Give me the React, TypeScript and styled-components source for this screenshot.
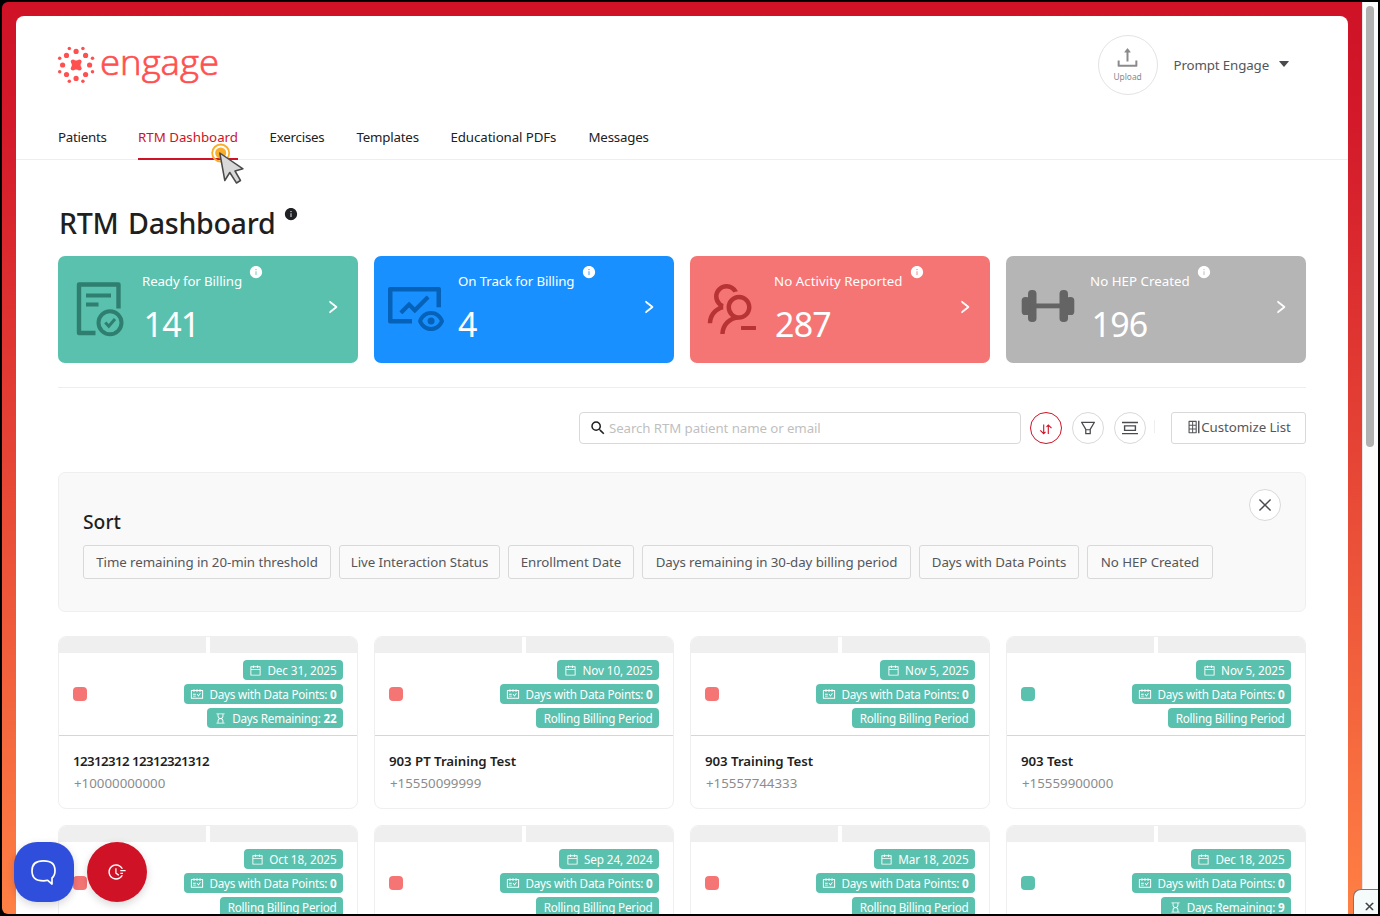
import React from "react";
import styled, { createGlobalStyle, css } from "styled-components";
import {
  AiOutlineFundView,
  AiOutlineUsergroupDelete,
  AiOutlineRight,
  AiFillInfoCircle,
  AiOutlineUpload,
  AiOutlineFilter,
  AiOutlineClose,
  AiOutlineCalendar,
  AiOutlineSchedule,
  AiOutlineHourglass,
  AiOutlineFieldTime,
  AiOutlineInsertRowRight,
  AiFillCaretDown,
} from "react-icons/ai";
import { MdSearch } from "react-icons/md";

const GlobalStyle = createGlobalStyle`
  * { box-sizing: border-box; }
  body {
    margin: 0;
    background: #000;
    font-family: "Noto Sans", "Open Sans", sans-serif;
    font-size: 13.3px;
    color: #202124;
    overflow: hidden;
  }
  button { font: inherit; letter-spacing: inherit; }
  svg { display: block; flex: none; }
`;

const Frame = styled.div`
  position: relative;
  display: flex;
  width: 1380px;
  height: 916px;
  padding: 2px;
  background: #000;
  overflow: hidden;
`;

const Backdrop = styled.div`
  width: 1360px;
  height: 912px;
  padding: 14px 14px 0;
  border-radius: 6px 0 0 6px;
  background: linear-gradient(180deg, #cf1226 0%, #d3192a 13%, #ff8044 100%);
  overflow: hidden;
`;

const Page = styled.main`
  height: 898px;
  background: #fff;
  border-radius: 8px 8px 0 0;
  overflow: hidden;
`;

const ScrollTrack = styled.div`
  width: 16px;
  padding: 4px 4px 0 3px;
  background: #fcfcfc;
  border-left: 1px solid #e4e4e4;
`;

const ScrollThumb = styled.div`
  width: 8px;
  height: 441px;
  border-radius: 4px;
  background: #b1b1b1;
`;

const Header = styled.header`
  display: flex;
  justify-content: space-between;
  height: 99px;
  padding: 19px 58px 0 42px;
`;

const Logo = styled.svg`
  margin-top: 8px;
  overflow: visible;
`;

const Account = styled.div`
  display: flex;
  align-items: center;
  height: 60px;
  color: #54565a;
  letter-spacing: -0.13px;
`;

const UploadButton = styled.button`
  display: flex;
  flex-direction: column;
  align-items: center;
  width: 60px;
  height: 60px;
  margin-right: 16px;
  padding: 8px 0 0;
  border: 1px solid #e3e3e3;
  border-radius: 50%;
  background: #fff;
  color: #8a8a8a;
  span { font-size: 8.4px; line-height: 12px; margin-top: 0; letter-spacing: 0; }
`;

const Caret = styled(AiFillCaretDown)`
  margin: -3px -1px 0 8px;
  color: #4a4b4e;
`;

const Nav = styled.nav`
  display: flex;
  gap: 32px;
  height: 45px;
  padding-left: 42px;
  border-bottom: 1px solid #eee;
`;

const NavItem = styled.a<{ $active?: boolean; $w: number; $track: number }>`
  width: ${(p) => p.$w}px;
  height: 45px;
  padding-top: 12px;
  line-height: 20px;
  letter-spacing: ${(p) => p.$track}px;
  white-space: nowrap;
  color: ${(p) => (p.$active ? "#cf1226" : "#202124")};
  border-bottom: 2px solid ${(p) => (p.$active ? "#cf1226" : "transparent")};
`;

const Content = styled.div`
  padding: 0 42px;
`;

const TitleRow = styled.div`
  display: flex;
  height: 96px;
  padding-top: 43px;
`;

const Title = styled.h1`
  width: 219px;
  margin: 0;
  padding-left: 1px;
  font-size: 28.6px;
  line-height: 40px;
  font-weight: 500;
  letter-spacing: -0.3px;
  word-spacing: 2.5px;
  white-space: nowrap;
  color: #1f1f1f;
`;

const InfoIcon = styled(AiFillInfoCircle)`
  margin: 4px 0 0 7px;
`;

const CardGrid = styled.div`
  display: grid;
  grid-template-columns: repeat(4, 300px);
  gap: 16px;
`;

const StatGrid = styled(CardGrid)`
  padding-bottom: 24px;
  border-bottom: 1px solid #eee;
`;

const StatCard = styled.section<{ $bg: string }>`
  display: flex;
  height: 107px;
  border-radius: 7px;
  color: #fff;
  background: ${(p) => p.$bg};
`;

const StatIcon = styled.div<{ $ink: string; $lift: number }>`
  display: flex;
  align-items: center;
  justify-content: center;
  width: 84px;
  padding-bottom: ${(p) => p.$lift}px;
  color: ${(p) => p.$ink};
`;

const StatBody = styled.div`
  flex: 1;
  padding-top: 8px;
`;

const StatLabel = styled.div<{ $track: number }>`
  display: flex;
  height: 34px;
  letter-spacing: ${(p) => p.$track}px;
  white-space: nowrap;
  span { line-height: 34px; }
  svg { margin: 1px 0 0 7.5px; }
`;

const StatValue = styled.div<{ $indent: number }>`
  padding-left: ${(p) => p.$indent}px;
  font-size: 34px;
  line-height: 48px;
  margin-top: 2px;
  letter-spacing: -0.8px;
`;

const StatArrow = styled(AiOutlineRight)`
  align-self: center;
  margin: -5px 17px 0 0;
  stroke: currentColor;
  stroke-width: 45px;
`;

const Toolbar = styled.div`
  display: flex;
  align-items: center;
  justify-content: flex-end;
  height: 32px;
  margin-top: 24px;
`;

const SearchBox = styled.label`
  display: flex;
  align-items: center;
  gap: 2px;
  width: 442px;
  height: 32px;
  margin-right: 9px;
  padding-left: 9px;
  border: 1px solid #d9d9d9;
  border-radius: 4px;
  svg { margin-top: -1px; color: #202020; }
  input {
    flex: 1;
    border: 0;
    outline: 0;
    padding: 0;
    font: inherit;
    letter-spacing: -0.1px;
  }
  input::placeholder { color: #bfbfbf; }
`;

const RoundButton = styled.button<{ $accent?: boolean }>`
  display: flex;
  align-items: center;
  justify-content: center;
  width: 32px;
  height: 32px;
  padding: 0;
  border: 1px solid ${(p) => (p.$accent ? "#cf1226" : "#d9d9d9")};
  border-radius: 50%;
  background: #fff;
  color: ${(p) => (p.$accent ? "#cf1226" : "#4a4b4e")};
  & + & { margin-left: 10px; }
`;

const ToolDivider = styled.i`
  width: 1px;
  height: 13px;
  margin: -3px 16px 0 8px;
  background: #eee;
`;

const buttonFace = css`
  display: flex;
  align-items: center;
  justify-content: center;
  padding: 0;
  border: 1px solid #d9d9d9;
  border-radius: 3px;
  color: #54565a;
  letter-spacing: -0.07px;
  white-space: nowrap;
`;

const CustomizeButton = styled.button`
  ${buttonFace}
  width: 135px;
  height: 32px;
  padding-bottom: 2px;
  background: #fff;
  svg { margin-right: -1px; }
`;

const SortPanel = styled.section`
  height: 140px;
  margin: 28px 0 24px;
  padding: 16px 24px 0;
  border: 1px solid #efefef;
  border-radius: 7px;
  background: #f9f9f9;
`;

const CloseRow = styled.div`
  display: flex;
  justify-content: flex-end;
  height: 20px;
`;

const SortTitle = styled.h2`
  margin: 0;
  font-size: 19.3px;
  line-height: 26px;
  font-weight: 500;
  color: #1f1f1f;
`;

const SortOptions = styled.div`
  display: flex;
  gap: 8px;
  margin-top: 10px;
`;

const SortOption = styled.button<{ $w: number }>`
  ${buttonFace}
  width: ${(p) => p.$w}px;
  height: 34px;
  background: #fafafa;
`;

const PatientCard = styled.article`
  height: 173px;
  border: 1px solid #efefef;
  border-radius: 8px;
  background: #fff;
  overflow: hidden;
`;

const Strip = styled.div`
  display: flex;
  gap: 4px;
  height: 16px;
  background: #fff;
  &::before, &::after { content: ""; flex: 1; background: #efefef; }
`;

const CardTop = styled.div`
  display: flex;
  align-items: center;
  justify-content: space-between;
  height: 83px;
  padding: 0 14px;
  border-bottom: 1px solid #d6d6d6;
`;

const Status = styled.span<{ $color: string }>`
  width: 14px;
  height: 14px;
  border-radius: 4px;
  background: ${(p) => p.$color};
`;

const Badges = styled.div`
  display: flex;
  flex-direction: column;
  align-items: flex-end;
  gap: 4px;
`;

const Badge = styled.span<{ $w: number; $track?: number }>`
  display: flex;
  align-items: center;
  justify-content: flex-end;
  width: ${(p) => p.$w}px;
  height: 20px;
  padding: 0 6.5px 0 0;
  border-radius: 4px;
  background: #5ac1ae;
  color: #fff;
  font-size: 11.7px;
  letter-spacing: ${(p) => p.$track ?? -0.22}px;
  line-height: 20px;
  white-space: pre;
  svg { margin: 0 5px 0 0; }
  b { font-weight: 700; }
`;

const PatientName = styled.div<{ $track?: number }>`
  padding: 14px 14px 0;
  line-height: 22px;
  font-weight: 600;
  letter-spacing: ${(p) => p.$track ?? -0.06}px;
  color: #1f1f1f;
`;

const PatientPhone = styled.div`
  padding: 0 15px;
  line-height: 22px;
  color: #8c8c8c;
`;

const Pointer = styled.svg`
  position: absolute;
  left: 208px;
  top: 142px;
`;

const ChatLauncher = styled.button`
  position: absolute;
  left: 14px;
  top: 842px;
  display: flex;
  align-items: center;
  justify-content: center;
  width: 60px;
  height: 60px;
  padding: 0;
  border: 0;
  border-radius: 23px;
  color: #fff;
  background: #304edc;
  box-shadow: 0 3px 8px rgba(0, 0, 0, 0.16);
`;

const TimeLauncher = styled(ChatLauncher)`
  left: 87px;
  border-radius: 50%;
  background: #cf1226;
`;

const CornerClose = styled.button`
  position: absolute;
  left: 1353px;
  top: 889px;
  display: flex;
  width: 25px;
  height: 25px;
  padding: 11px 0 0 10px;
  border: 1px solid #777;
  border-width: 1px 0 0 1px;
  border-radius: 8px 0 0 0;
  background: #f5fbfb;
  color: #333;
`;

const EngageLogo = () => (
  <Logo width="164" height="44" viewBox="0 0 164 44">
    <g fill="#ff5050">
      {[
        [18.1, 8.4], [27.6, 12.4], [31.6, 22], [27.6, 31.5], [18.1, 35.4], [8.5, 31.5], [4.6, 22], [8.5, 12.4],
      ].map(([x, y]) => <circle key={`${x}-${y}`} cx={x} cy={y} r="2.6" />)}
      {[
        [11.3, 5.4], [24.9, 5.4], [34.5, 15.2], [34.5, 28.7], [24.9, 38.3], [11.3, 38.3], [1.7, 28.7], [1.7, 15.2],
      ].map(([x, y]) => <circle key={`${x}-${y}`} cx={x} cy={y} r="1.75" />)}
      {[
        [15, 18.8], [21.4, 18.8], [15, 25.2], [21.4, 25.2],
      ].map(([x, y]) => <circle key={`${x}-${y}`} cx={x} cy={y} r="2.2" />)}
      <rect x="13.8" y="17.4" width="8.8" height="9.2" />
      <text x="42" y="31.5" fontFamily="Open Sans" fontSize="34" fontWeight="300" textLength="119" lengthAdjust="spacingAndGlyphs" stroke="#ff5050" strokeWidth="0.7">engage</text>
    </g>
  </Logo>
);

const ApprovedDocument = () => (
  <svg width="48" height="56" viewBox="0 0 48 56" fill="none" stroke="currentColor" strokeWidth="4.4">
    <path d="M19.500 52H3V3.500H42.500V27.500" strokeLinejoin="round" />
    <path d="M10 14.500H35M10 23.500H22.500" strokeWidth="4" />
    <circle cx="34" cy="41.700" r="11.500" strokeWidth="4" />
    <path d="M29.300 41.500l3.500 3.800 6.200-7.300" strokeWidth="3" />
  </svg>
);

const Dumbbell = () => (
  <svg width="54" height="34" viewBox="0 0 54 34" fill="currentColor">
    <rect x="12" y="14.5" width="30" height="4.8" />
    <rect x="7" y="1" width="8.500" height="32" rx="3.8" />
    <rect x="38.500" y="1" width="8.500" height="32" rx="3.8" />
    <rect x="0.700" y="8" width="8" height="18" rx="3.6" />
    <rect x="45.300" y="8" width="8" height="18" rx="3.6" />
  </svg>
);

const SortArrows = () => (
  <svg width="14" height="14" viewBox="0 0 14 14" fill="none" stroke="currentColor" strokeWidth="1.1">
    <path d="M4.700 3.500v9M1.300 9.300l3.400 3.400 1.800-1.900M9.300 12.900V4.200M7.500 5.800l1.800-1.800 3.200 3.200" />
  </svg>
);

const DensityIcon = () => (
  <svg width="16" height="14" viewBox="0 0 16 14" fill="none" stroke="currentColor" strokeWidth="1.4">
    <path d="M0 1.500h16M0 12.600h16M2.600 4.900h10.800v4.500h-10.800z" />
  </svg>
);

const ChatIcon = () => (
  <svg width="28" height="28" viewBox="0 0 28 28" fill="none" stroke="currentColor" strokeWidth="1.7" strokeLinejoin="round">
    <path d="M13.500 2.800C5.500 2.800 2 6 2 12.800s3.500 10 11.500 10c1.500 0 3-.2 4.200-.5L22 26V20C24.500 18 25 16 25 12.800 25 6 21.500 2.800 13.500 2.800Z" />
  </svg>
);

const navItems = [
  { label: "Patients", w: 48, track: -0.25 },
  { label: "RTM Dashboard", w: 99.5, track: 0, active: true },
  { label: "Exercises", w: 55, track: -0.22 },
  { label: "Templates", w: 62, track: -0.2 },
  { label: "Educational PDFs", w: 106, track: -0.1 },
  { label: "Messages", w: 61, track: -0.2 },
];

const stats = [
  { label: "Ready for Billing", track: -0.12, value: "141", indent: 1.5, bg: "#5ac1ae", ink: "#2f7f70", lift: 2, icon: <ApprovedDocument /> },
  { label: "On Track for Billing", track: -0.12, value: "4", indent: 0, bg: "#1890ff", ink: "#0662b8", lift: 2, icon: <AiOutlineFundView size={64} /> },
  { label: "No Activity Reported", track: 0.03, value: "287", indent: 1, bg: "#f57575", ink: "#b83434", lift: 2, icon: <AiOutlineUsergroupDelete size={64} /> },
  { label: "No HEP Created", track: 0.02, value: "196", indent: 1.5, bg: "#b5b5b5", ink: "#646464", lift: 8, icon: <Dumbbell /> },
];

const sortOptions = [
  { label: "Time remaining in 20-min threshold", w: 248 },
  { label: "Live Interaction Status", w: 161 },
  { label: "Enrollment Date", w: 126 },
  { label: "Days remaining in 30-day billing period", w: 269 },
  { label: "Days with Data Points", w: 160 },
  { label: "No HEP Created", w: 126 },
];

const RED = "#f57575";
const GREEN = "#5ac1ae";

const patients = [
  { name: "12312312 12312321312", track: -0.6, phone: "+10000000000", date: "Dec 31, 2025", dateW: 100, remaining: 22, color: RED },
  { name: "903 PT Training Test", phone: "+15550099999", date: "Nov 10, 2025", dateW: 102, color: RED },
  { name: "903 Training Test", phone: "+15557744333", date: "Nov 5, 2025", dateW: 95, color: RED },
  { name: "903 Test", phone: "+15559900000", date: "Nov 5, 2025", dateW: 95, color: GREEN },
  { name: "", phone: "", date: "Oct 18, 2025", dateW: 99, color: RED },
  { name: "", phone: "", date: "Sep 24, 2024", dateW: 100, color: RED },
  { name: "", phone: "", date: "Mar 18, 2025", dateW: 101, color: RED },
  { name: "", phone: "", date: "Dec 18, 2025", dateW: 100, remaining: 9, color: GREEN },
];

export default function App() {
  return (
    <Frame>
      <GlobalStyle />
      <Backdrop>
        <Page>
          <Header>
            <EngageLogo />
            <Account>
              <UploadButton>
                <AiOutlineUpload size={27} />
                <span>Upload</span>
              </UploadButton>
              Prompt Engage
              <Caret size={14} />
            </Account>
          </Header>
          <Nav>
            {navItems.map((n) => (
              <NavItem key={n.label} $w={n.w} $track={n.track} $active={n.active}>{n.label}</NavItem>
            ))}
          </Nav>
          <Content>
            <TitleRow>
              <Title>RTM Dashboard</Title>
              <InfoIcon size={14} />
            </TitleRow>
            <StatGrid>
              {stats.map((s) => (
                <StatCard key={s.label} $bg={s.bg}>
                  <StatIcon $ink={s.ink} $lift={s.lift}>{s.icon}</StatIcon>
                  <StatBody>
                    <StatLabel $track={s.track}>
                      <span>{s.label}</span>
                      <AiFillInfoCircle size={14} />
                    </StatLabel>
                    <StatValue $indent={s.indent}>{s.value}</StatValue>
                  </StatBody>
                  <StatArrow size={16} />
                </StatCard>
              ))}
            </StatGrid>
            <Toolbar>
              <SearchBox>
                <MdSearch size={18} />
                <input placeholder="Search RTM patient name or email" />
              </SearchBox>
              <RoundButton $accent><SortArrows /></RoundButton>
              <RoundButton><AiOutlineFilter size={18} /></RoundButton>
              <RoundButton><DensityIcon /></RoundButton>
              <ToolDivider />
              <CustomizeButton>
                <AiOutlineInsertRowRight size={16} />
                Customize List
              </CustomizeButton>
            </Toolbar>
            <SortPanel>
              <CloseRow>
                <RoundButton><AiOutlineClose size={18} /></RoundButton>
              </CloseRow>
              <SortTitle>Sort</SortTitle>
              <SortOptions>
                {sortOptions.map((o) => (
                  <SortOption key={o.label} $w={o.w}>{o.label}</SortOption>
                ))}
              </SortOptions>
            </SortPanel>
            <CardGrid>
              {patients.map((p, i) => (
                <PatientCard key={i}>
                  <Strip />
                  <CardTop>
                    <Status $color={p.color} />
                    <Badges>
                      <Badge $w={p.dateW} $track={-0.08}><AiOutlineCalendar size={13} />{p.date}</Badge>
                      <Badge $w={159}><AiOutlineSchedule size={14} />Days with Data Points: <b>0</b></Badge>
                      {p.remaining ? (
                        <Badge $w={p.remaining > 9 ? 136 : 130}><AiOutlineHourglass size={13} />Days Remaining: <b>{p.remaining}</b></Badge>
                      ) : (
                        <Badge $w={123}>Rolling Billing Period</Badge>
                      )}
                    </Badges>
                  </CardTop>
                  <PatientName $track={p.track}>{p.name}</PatientName>
                  <PatientPhone>{p.phone}</PatientPhone>
                </PatientCard>
              ))}
            </CardGrid>
          </Content>
        </Page>
      </Backdrop>
      <ScrollTrack><ScrollThumb /></ScrollTrack>
      <Pointer width="40" height="46" viewBox="0 0 40 46">
        <circle cx="12.700" cy="11" r="8.500" fill="none" stroke="#f9ae2b" strokeWidth="1.800" />
        <circle cx="12.700" cy="11" r="5.500" fill="#f9ae2b" />
        <path d="M11.800 11 16.800 38.500 21.800 30.500 28.500 41 32.500 38.500 27 29 35 26.800Z" fill="#d9d9d9" stroke="#4a4a4a" strokeWidth="1.500" strokeLinejoin="round" />
      </Pointer>
      <ChatLauncher><ChatIcon /></ChatLauncher>
      <TimeLauncher><AiOutlineFieldTime size={20} /></TimeLauncher>
      <CornerClose><AiOutlineClose size={11} stroke="currentColor" strokeWidth={60} /></CornerClose>
    </Frame>
  );
}
